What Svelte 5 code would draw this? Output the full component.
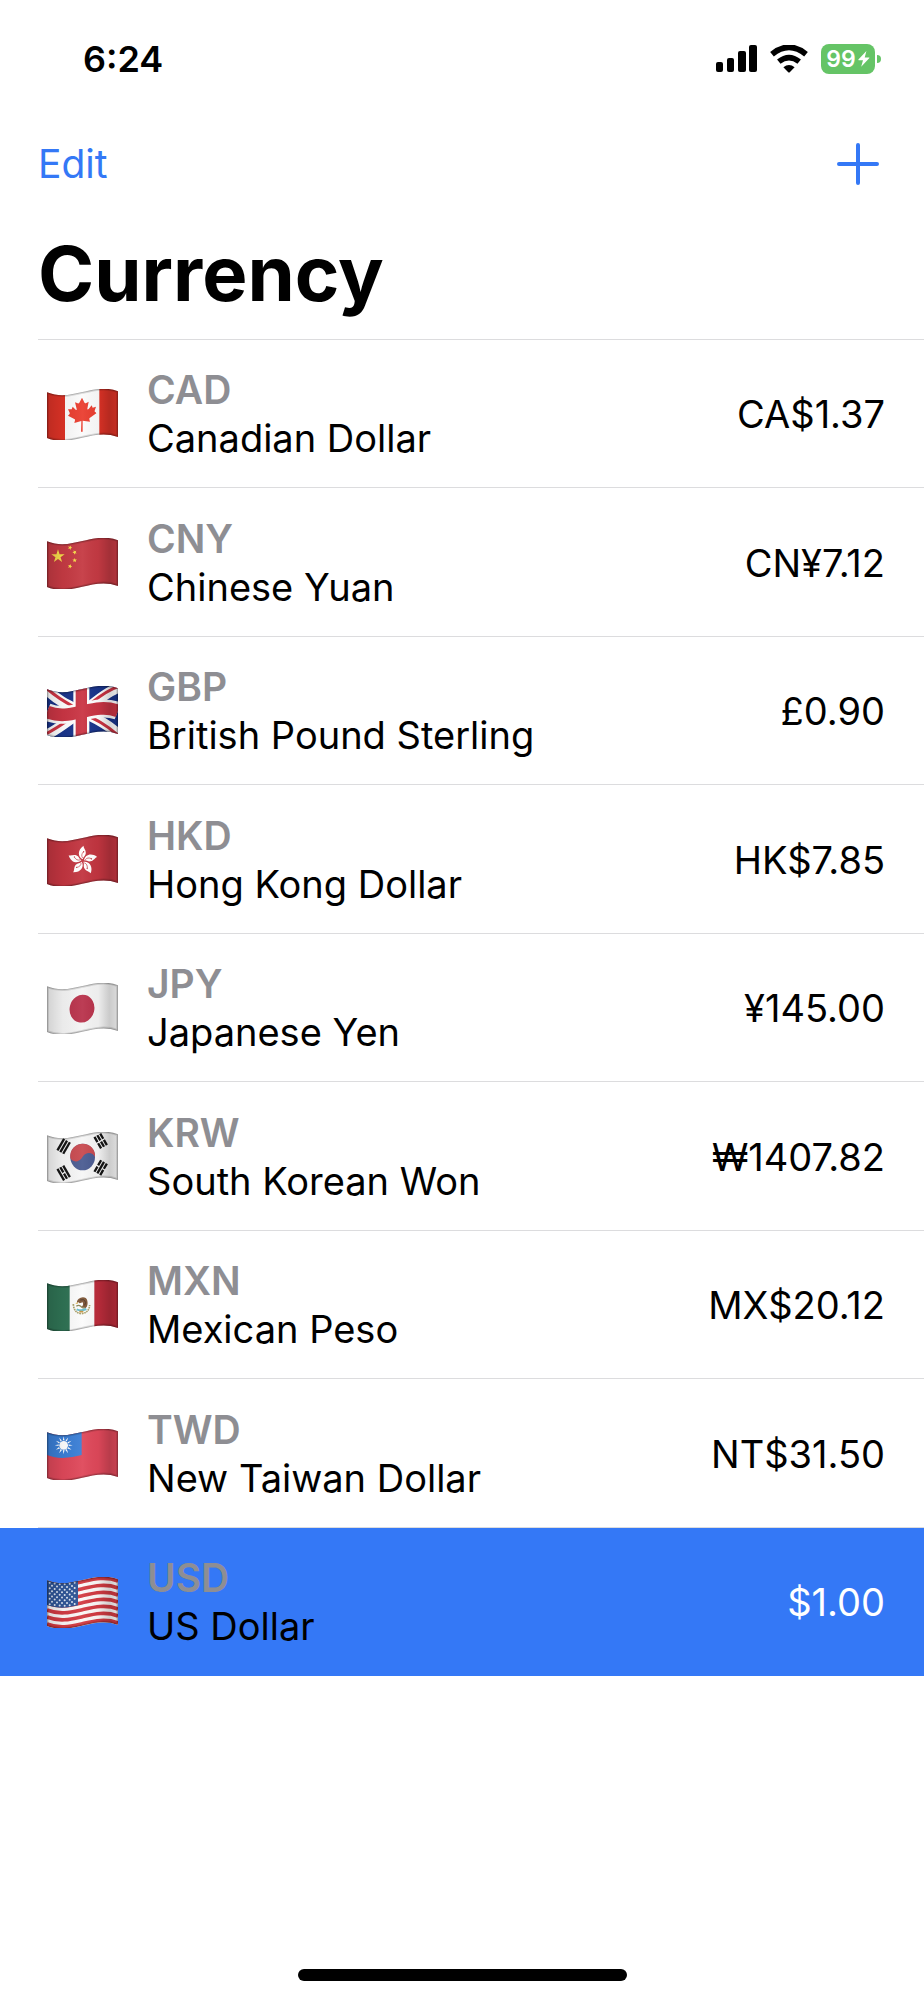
<script>
  const wave = 'M0 10 C40 26 75 16 106 9 C137 2 175 -8 213 7';
  const cloth = wave + ' V144 C175 129 137 139 106 146 C75 153 40 163 0 147 Z';

  let selected = $state('USD');

  const currencies = [
    { code: 'CAD', name: 'Canadian Dollar', amount: 'CA$1.37' },
    { code: 'CNY', name: 'Chinese Yuan', amount: 'CN¥7.12' },
    { code: 'GBP', name: 'British Pound Sterling', amount: '£0.90' },
    { code: 'HKD', name: 'Hong Kong Dollar', amount: 'HK$7.85' },
    { code: 'JPY', name: 'Japanese Yen', amount: '¥145.00' },
    { code: 'KRW', name: 'South Korean Won', amount: '₩1407.82' },
    { code: 'MXN', name: 'Mexican Peso', amount: 'MX$20.12' },
    { code: 'TWD', name: 'New Taiwan Dollar', amount: 'NT$31.50' },
    { code: 'USD', name: 'US Dollar', amount: '$1.00' }
  ];

  // Points of a star with n tips, first tip turned by `turn` degrees from the top.
  function star(cx, cy, outer, inner, n = 5, turn = 0) {
    const points = [];
    for (let i = 0; i < n * 2; i++) {
      const r = i % 2 ? inner : outer;
      const a = (Math.PI * i) / n - Math.PI / 2 + (turn * Math.PI) / 180;
      points.push(`${(cx + r * Math.cos(a)).toFixed(1)},${(cy + r * Math.sin(a)).toFixed(1)}`);
    }
    return points.join(' ');
  }

  const smallStars = [[69, 29, 20], [83, 43, 45], [83, 67, 0], [69, 85, 20]];
  const trigrams = [
    { x: 50, y: 43, angle: 30, split: [] },
    { x: 161, y: 27, angle: -30, split: [-10, 0, 10] },
    { x: 50, y: 123, angle: -30, split: [0] },
    { x: 161, y: 107, angle: 30, split: [-10, 10] }
  ];
  const unionStars = [];
  for (let row = 0; row < 9; row++) {
    for (let col = 0; col < (row % 2 ? 5 : 6); col++) {
      const x = (row % 2 ? 15 : 8) + col * 15;
      unionStars.push([x, 16 + row * 8 + 6 * Math.sin(x / 34) - (x > 60 ? (x - 60) / 8 : 0)]);
    }
  }
</script>

{#snippet flag(code)}
  <svg class="flag" viewBox="0 0 213 153" aria-hidden="true">
    <defs>
      <clipPath id="cloth-{code}"><path d={cloth} /></clipPath>
      <linearGradient id="shade-{code}" x1="0" x2="1" y1="0" y2="0">
        <stop offset="0" stop-color="#000" stop-opacity="0.14" />
        <stop offset="0.22" stop-color="#000" stop-opacity="0.04" />
        <stop offset="0.5" stop-color="#fff" stop-opacity="0.05" />
        <stop offset="0.72" stop-color="#000" stop-opacity="0.03" />
        <stop offset="0.88" stop-color="#000" stop-opacity="0.17" />
        <stop offset="1" stop-color="#000" stop-opacity="0.1" />
      </linearGradient>
    </defs>
    <g clip-path="url(#cloth-{code})">
      {#if code === 'CAD'}
        <rect width="213" height="153" fill="#fbfbfb" />
        <rect width="54" height="153" fill="#dc3226" />
        <rect x="157" width="56" height="153" fill="#dc3226" />
        <path
          fill="#ea3e30"
          d="M105 26 L113 42 Q115 44 118 42 L125 38 L121 59 Q121 63 125 60 L134 49 L137 56 L147 53 L143 65 Q142 68 146 70 L148 73 L128 87 Q126 89 127 91 L129 98 L107 95 L107 128 L102 128 L103 96 L82 102 L84 94 Q85 91 82 90 L63 80 L67 76 Q69 74 68 71 L63 61 L74 61 L77 53 L86 62 Q90 64 89 60 L84 40 L92 43 Q95 44 97 41 Z"
        />
      {:else if code === 'CNY'}
        <rect width="213" height="153" fill="#c53a43" />
        <polygon points={star(33, 55, 21, 8)} fill="#f7dc4b" />
        {#each smallStars as [x, y, turn]}
          <polygon points={star(x, y, 7, 3, 5, turn)} fill="#f7dc4b" />
        {/each}
      {:else if code === 'GBP'}
        <rect width="213" height="153" fill="#19348b" />
        <path d="M0 12 C40 50 70 60 106 78 S170 105 213 143 M0 146 C40 126 70 98 106 76 S170 22 213 6" fill="none" stroke="#fff" stroke-width="31" />
        <path d="M0 8 C40 44 70 56 106 76 M106 74 C70 96 40 122 0 142 M106 82 C140 98 170 110 213 148 M106 70 C140 48 170 16 213 2" fill="none" stroke="#cf3444" stroke-width="9" />
        <path d={wave} transform="translate(0 68)" fill="none" stroke="#fff" stroke-width="54" />
        <path d="M103 0 V153" stroke="#fff" stroke-width="48" />
        <path d={wave} transform="translate(0 68)" fill="none" stroke="#ca3544" stroke-width="38" />
        <path d="M103 0 V153" stroke="#ca3544" stroke-width="34" />
      {:else if code === 'HKD'}
        <rect width="213" height="153" fill="#c23540" />
        <g transform="translate(107 77)">
          {#each [6, 78, 150, 222, 294] as turn}
            <g transform="rotate({turn})">
              <path d="M0 -4 C-17 -10 -19 -31 -2 -45 C-2 -38 7 -33 7 -23 C7 -14 0 -12 0 -4 Z" fill="#fff" />
              <path d="M-1 -8 C-6 -14 -5 -20 -1 -26" fill="none" stroke="#c23540" stroke-width="2" />
              <circle cx="0" cy="-27" r="2" fill="#c23540" />
            </g>
          {/each}
        </g>
      {:else if code === 'JPY'}
        <rect width="213" height="153" fill="#f4f4f4" />
        <ellipse cx="105" cy="77" rx="37" ry="42" transform="rotate(14 105 77)" fill="#b9334c" />
      {:else if code === 'KRW'}
        <rect width="213" height="153" fill="#f6f6f6" />
        <ellipse cx="107" cy="75" rx="37" ry="40" fill="#4b5c92" />
        <path d="M70 79 C67 52 86 35 107 35 C130 35 147 54 144 74 C137 60 117 58 107 74 C96 93 77 91 70 79 Z" fill="#c84a50" />
        {#each trigrams as t}
          <g transform="translate({t.x} {t.y}) rotate({t.angle})">
            {#each [-10, 0, 10] as x}
              <path
                d={t.split.includes(x) ? `M${x} -20 V-2 M${x} 2 V20` : `M${x} -20 V20`}
                stroke="#151515"
                stroke-width="7"
              />
            {/each}
          </g>
        {/each}
      {:else if code === 'MXN'}
        <rect width="213" height="153" fill="#fbfbfb" />
        <rect width="68" height="153" fill="#2f7254" />
        <rect x="142" width="71" height="153" fill="#bb2c3b" />
        <path d="M79 72 Q80 98 103 101 Q126 99 128 75" fill="none" stroke="#a9a06a" stroke-width="5" stroke-dasharray="5 2" />
        <path d="M90 70 Q88 58 101 53 Q117 49 121 62 Q124 76 116 84 L103 82 Q111 75 107 67 L98 70 L93 66 Z" fill="#7d5637" />
        <path d="M100 60 L110 59 L116 67 L113 76" fill="none" stroke="#4e3525" stroke-width="3" />
        <path d="M91 66 L85 71 L93 71 Z" fill="#d9ae45" />
        <path d="M88 79 Q95 73 101 79 T113 84" fill="none" stroke="#8a8555" stroke-width="4" />
        <path d="M89 88 Q103 94 118 87" fill="none" stroke="#66bfd0" stroke-width="6" />
        <path d="M97 95 H109" stroke="#c59341" stroke-width="5" />
      {:else if code === 'TWD'}
        <rect width="213" height="153" fill="#df485a" />
        <path d="M0 0 H104 V78 C75 84 40 94 0 78 Z" fill="#3b7fd6" />
        <polygon points={star(50, 49, 27, 12, 12)} fill="#fff" />
        <circle cx="50" cy="49" r="15" fill="#3b7fd6" />
        <circle cx="50" cy="49" r="13" fill="#fff" />
      {:else}
        <rect width="213" height="153" fill="#fbf7f7" />
        {#each [0, 1, 2, 3, 4, 5, 6] as n}
          <path d={wave} transform="translate(0 {5 + n * 21})" fill="none" stroke="#d23a42" stroke-width="11" />
        {/each}
        <path d="M0 0 H93 V85 C68 91 38 98 0 84 Z" fill="#2f5597" />
        {#each unionStars as [x, y]}
          <circle cx={x} cy={y} r="3" fill="#dfe7f3" />
        {/each}
      {/if}
      <rect width="213" height="153" fill="url(#shade-{code})" />
      <path d={cloth} fill="none" stroke="#000" stroke-opacity="0.12" stroke-width="11" />
      <path d={cloth} fill="none" stroke="#000" stroke-opacity="0.2" stroke-width="5" />
    </g>
  </svg>
{/snippet}

<div class="screen">
  <header>
    <div class="status">
      <time>6:24</time>
      <div class="indicators">
        <svg width="41" height="28" viewBox="0 0 41 28" role="img" aria-label="Signal strength">
          <rect x="0" y="17" width="7" height="10" rx="2" />
          <rect x="11" y="13" width="7" height="14" rx="2" />
          <rect x="22" y="6" width="8" height="21" rx="2" />
          <rect x="33" y="0" width="8" height="27" rx="2" />
        </svg>
        <svg width="38" height="28" viewBox="0 0 38 28" role="img" aria-label="Wi-Fi">
          <path d="M2 9.2 Q19 -4.6 36 9.2" fill="none" stroke="#000" stroke-width="5.8" />
          <path d="M8.8 16.6 Q19 8.6 29.2 16.6" fill="none" stroke="#000" stroke-width="5.6" />
          <path d="M13.4 22.2 Q19 17.6 24.6 22.2 L20 27 Q19 28 18 27 Z" />
        </svg>
        <div class="battery">
          <span>99</span>
          <svg width="12" height="16" viewBox="0 0 12 16" aria-hidden="true">
            <path d="M8.4 0 L0.4 8.6 Q0 9.3 0.8 9.3 L5 9.3 L3.2 15.8 L11.4 7 Q11.8 6.4 11 6.4 L6.7 6.4 Z" fill="#fff" />
          </svg>
        </div>
      </div>
    </div>
    <nav>
      <button class="edit" type="button">Edit</button>
      <button class="add" type="button" aria-label="Add currency">
        <svg width="42" height="42" viewBox="0 0 42 42" aria-hidden="true">
          <path d="M21 2 V40 M2 21 H40" fill="none" stroke="currentColor" stroke-width="4" stroke-linecap="round" />
        </svg>
      </button>
    </nav>
    <h1>Currency</h1>
  </header>

  <ul>
    {#each currencies as c}
      <li class:selected={c.code === selected}>
        <button class="row" type="button" aria-pressed={c.code === selected} onclick={() => (selected = c.code)}>
          {@render flag(c.code)}
          <span class="label">
            <span class="code">{c.code}</span>
            <span>{c.name}</span>
          </span>
          <span class="amount">{c.amount}</span>
        </button>
      </li>
    {/each}
  </ul>

  <div class="home"></div>
</div>

<style>
  :global(body) {
    background: #fff;
  }
  .screen {
    display: flex;
    flex-direction: column;
    box-sizing: border-box;
    min-height: 100vh;
    padding-bottom: 19px;
    color: #000;
    font-family: Inter, 'Liberation Sans', sans-serif;
    font-size: 38px;
    line-height: 48px;
  }
  button {
    padding: 0;
    border: 0;
    background: none;
    color: inherit;
    font: inherit;
    text-align: left;
    cursor: pointer;
  }
  svg {
    display: block;
    flex: none;
  }
  .status {
    display: flex;
    align-items: center;
    justify-content: space-between;
    height: 118px;
    padding: 0 43px 0 83px;
  }
  time {
    font-size: 36px;
    font-weight: 600;
  }
  .indicators {
    display: flex;
    align-items: center;
    gap: 13px;
  }
  .battery {
    position: relative;
    display: flex;
    align-items: center;
    justify-content: center;
    gap: 2px;
    width: 54px;
    height: 30px;
    margin-right: 6px;
    border-radius: 8px;
    background: #65c466;
    color: #fff;
    font-size: 23px;
    font-weight: 600;
    line-height: 30px;
  }
  .battery::after {
    content: '';
    position: absolute;
    left: 56px;
    top: 11px;
    width: 4px;
    height: 8px;
    border-radius: 0 4px 4px 0;
    background: #65c466;
  }
  nav {
    display: flex;
    align-items: center;
    justify-content: space-between;
    height: 92px;
    padding: 0 45px 0 38px;
    color: #3478f6;
  }
  .edit,
  .code {
    font-size: 39px;
  }
  h1 {
    margin: 0;
    padding: 17px 38px 20px;
    font-size: 76px;
    font-weight: 700;
    line-height: 92px;
  }
  ul {
    margin: 0;
    padding: 0;
    list-style: none;
  }
  li {
    padding-left: 38px;
  }
  li:first-child .row {
    border-top: 1px solid #dcdcde;
  }
  .row {
    display: flex;
    align-items: center;
    gap: 29px;
    width: 100%;
    padding: 26px 39px 25px 9px;
    border-bottom: 1px solid #dcdcde;
  }
  li:nth-child(even) .row {
    padding-top: 27px;
  }
  .flag {
    width: 71px;
    height: 51px;
  }
  .label {
    display: flex;
    flex: 1;
    flex-direction: column;
  }
  .code {
    color: #8e8e93;
    font-weight: 600;
  }
  .selected {
    background: #3478f6;
  }
  .selected .row {
    border-color: #3478f6;
  }
  .selected .amount {
    color: #fff;
  }
  .home {
    width: 329px;
    height: 12px;
    margin: auto auto 0;
    border-radius: 6px;
    background: #000;
  }
</style>
